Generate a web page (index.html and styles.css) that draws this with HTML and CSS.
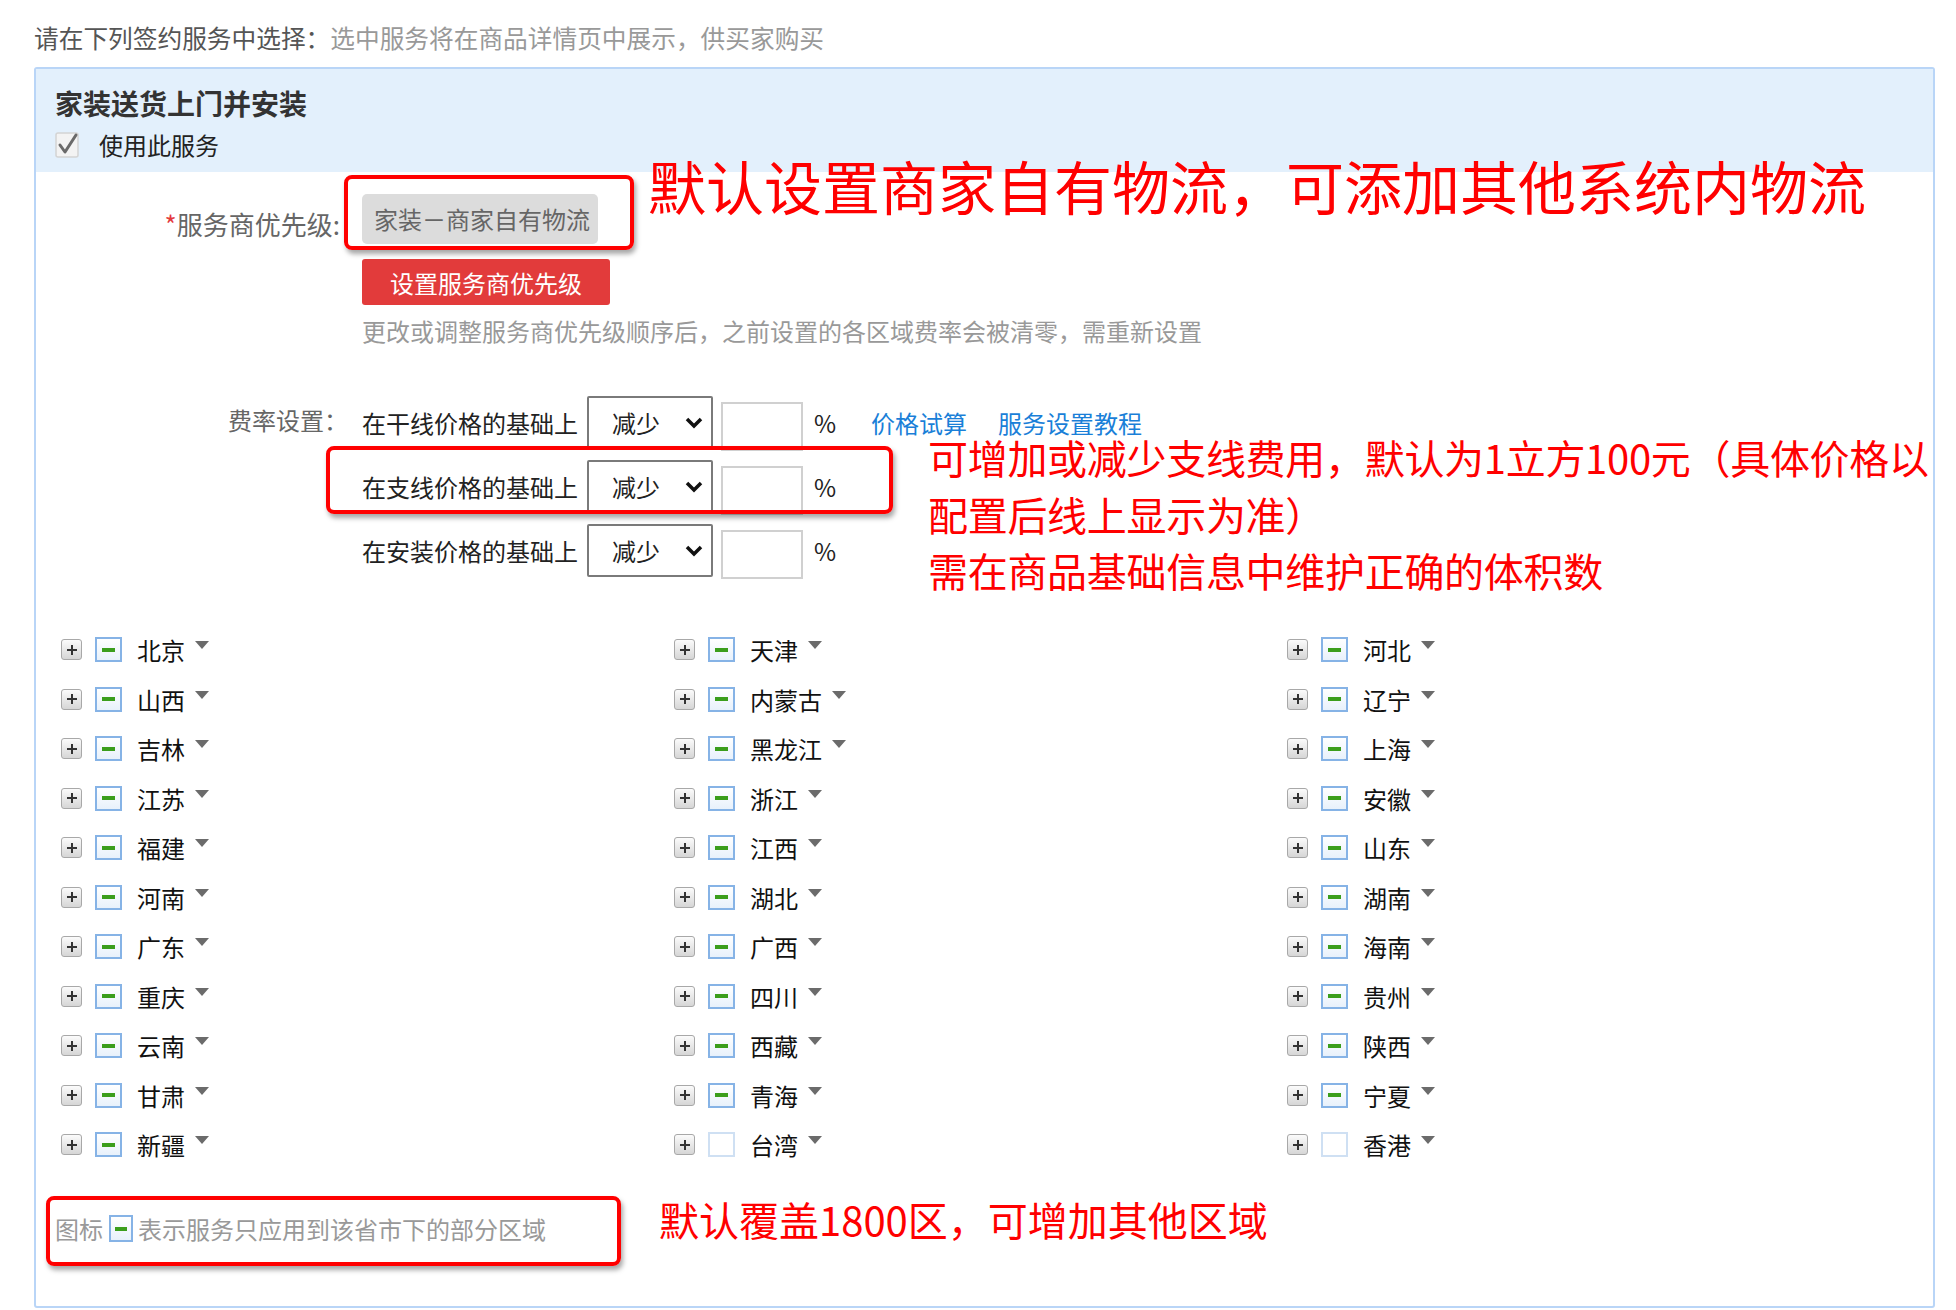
FILE: index.html
```html
<!DOCTYPE html>
<html lang="zh-CN">
<head>
    <meta charset="UTF-8">
    <meta name="viewport" content="width=device-width, initial-scale=1.0">
    <title>签约服务</title>
    <link rel="stylesheet" href="styles.css">
</head>
<body>
    <p class="intro">请在下列签约服务中选择：<span>选中服务将在商品详情页中展示，供买家购买</span></p>

    <div class="panel">
        <div class="panel-head">
            <h3>家装送货上门并安装</h3>
            <div class="use">
                <svg class="check" width="24" height="26" viewBox="0 0 24 26">
                    <rect x="1" y="1" width="22" height="24" rx="2" fill="#f3f3f3" stroke="#d4d4d4" stroke-width="1.5"/>
                    <path d="M5 13 L10 20 L21 3" fill="none" stroke="#6a6a6a" stroke-width="3" stroke-linecap="round" stroke-linejoin="round"/>
                </svg>
                <span>使用此服务</span>
            </div>
        </div>

        <div class="row priority">
            <div class="row-label"><em>*</em>服务商优先级:</div>
            <div class="row-body"><div class="provider">家装－商家自有物流</div></div>
        </div>
        <div class="row set-row">
            <div class="row-label"></div>
            <div class="row-body"><button class="btn-red">设置服务商优先级</button></div>
        </div>
        <p class="note">更改或调整服务商优先级顺序后，之前设置的各区域费率会被清零，需重新设置</p>

        <div class="row fees">
            <div class="row-label">费率设置：</div>
            <div class="row-body">
                <div class="fee">
                    <span class="fee-name">在干线价格的基础上</span>
                    <div class="select">减少<svg width="18" height="12" viewBox="0 0 18 12"><path d="M2 2 L9 9 L16 2" fill="none" stroke="#111" stroke-width="3.5"/></svg></div>
                    <div class="input"></div>
                    <span class="pct">%</span>
                    <a class="link first">价格试算</a>
                    <a class="link">服务设置教程</a>
                </div>
                <div class="fee">
                    <span class="fee-name">在支线价格的基础上</span>
                    <div class="select">减少<svg width="18" height="12" viewBox="0 0 18 12"><path d="M2 2 L9 9 L16 2" fill="none" stroke="#111" stroke-width="3.5"/></svg></div>
                    <div class="input"></div>
                    <span class="pct">%</span>
                </div>
                <div class="fee">
                    <span class="fee-name">在安装价格的基础上</span>
                    <div class="select">减少<svg width="18" height="12" viewBox="0 0 18 12"><path d="M2 2 L9 9 L16 2" fill="none" stroke="#111" stroke-width="3.5"/></svg></div>
                    <div class="input"></div>
                    <span class="pct">%</span>
                </div>
            </div>
        </div>

        <div class="areas">
            <div class="area"><i class="plus"></i><i class="part"></i><span>北京</span><b class="caret"></b></div>
            <div class="area"><i class="plus"></i><i class="part"></i><span>天津</span><b class="caret"></b></div>
            <div class="area"><i class="plus"></i><i class="part"></i><span>河北</span><b class="caret"></b></div>

            <div class="area"><i class="plus"></i><i class="part"></i><span>山西</span><b class="caret"></b></div>
            <div class="area"><i class="plus"></i><i class="part"></i><span>内蒙古</span><b class="caret"></b></div>
            <div class="area"><i class="plus"></i><i class="part"></i><span>辽宁</span><b class="caret"></b></div>

            <div class="area"><i class="plus"></i><i class="part"></i><span>吉林</span><b class="caret"></b></div>
            <div class="area"><i class="plus"></i><i class="part"></i><span>黑龙江</span><b class="caret"></b></div>
            <div class="area"><i class="plus"></i><i class="part"></i><span>上海</span><b class="caret"></b></div>

            <div class="area"><i class="plus"></i><i class="part"></i><span>江苏</span><b class="caret"></b></div>
            <div class="area"><i class="plus"></i><i class="part"></i><span>浙江</span><b class="caret"></b></div>
            <div class="area"><i class="plus"></i><i class="part"></i><span>安徽</span><b class="caret"></b></div>

            <div class="area"><i class="plus"></i><i class="part"></i><span>福建</span><b class="caret"></b></div>
            <div class="area"><i class="plus"></i><i class="part"></i><span>江西</span><b class="caret"></b></div>
            <div class="area"><i class="plus"></i><i class="part"></i><span>山东</span><b class="caret"></b></div>

            <div class="area"><i class="plus"></i><i class="part"></i><span>河南</span><b class="caret"></b></div>
            <div class="area"><i class="plus"></i><i class="part"></i><span>湖北</span><b class="caret"></b></div>
            <div class="area"><i class="plus"></i><i class="part"></i><span>湖南</span><b class="caret"></b></div>

            <div class="area"><i class="plus"></i><i class="part"></i><span>广东</span><b class="caret"></b></div>
            <div class="area"><i class="plus"></i><i class="part"></i><span>广西</span><b class="caret"></b></div>
            <div class="area"><i class="plus"></i><i class="part"></i><span>海南</span><b class="caret"></b></div>

            <div class="area"><i class="plus"></i><i class="part"></i><span>重庆</span><b class="caret"></b></div>
            <div class="area"><i class="plus"></i><i class="part"></i><span>四川</span><b class="caret"></b></div>
            <div class="area"><i class="plus"></i><i class="part"></i><span>贵州</span><b class="caret"></b></div>

            <div class="area"><i class="plus"></i><i class="part"></i><span>云南</span><b class="caret"></b></div>
            <div class="area"><i class="plus"></i><i class="part"></i><span>西藏</span><b class="caret"></b></div>
            <div class="area"><i class="plus"></i><i class="part"></i><span>陕西</span><b class="caret"></b></div>

            <div class="area"><i class="plus"></i><i class="part"></i><span>甘肃</span><b class="caret"></b></div>
            <div class="area"><i class="plus"></i><i class="part"></i><span>青海</span><b class="caret"></b></div>
            <div class="area"><i class="plus"></i><i class="part"></i><span>宁夏</span><b class="caret"></b></div>

            <div class="area"><i class="plus"></i><i class="part"></i><span>新疆</span><b class="caret"></b></div>
            <div class="area"><i class="plus"></i><i class="part empty"></i><span>台湾</span><b class="caret"></b></div>
            <div class="area"><i class="plus"></i><i class="part empty"></i><span>香港</span><b class="caret"></b></div>
        </div>

        <p class="legend">图标<i class="part small"></i>表示服务只应用到该省市下的部分区域</p>

        <!-- annotations drawn over the screenshot -->
        <div class="mark mark-provider"></div>
        <div class="mark mark-fee"></div>
        <div class="mark mark-legend"></div>
        <p class="tip tip-provider">默认设置商家自有物流，可添加其他系统内物流</p>
        <div class="tip tip-fee">
            <p>可增加或减少支线费用，默认为1立方100元（具体价格以</p>
            <p>配置后线上显示为准）</p>
            <p>需在商品基础信息中维护正确的体积数</p>
        </div>
        <p class="tip tip-legend">默认覆盖1800区，可增加其他区域</p>
    </div>
</body>
</html>
```

FILE: styles.css
```css
* {
    margin: 0;
    padding: 0;
    box-sizing: border-box;
    font-family: "Noto Sans CJK SC", "Noto Sans", sans-serif;
}

body {
    background-color: #fff;
    color: #222;
    font-size: 24px;
}

.intro {
    padding: 17px 0 0 34px;
    font-size: 24.7px;
    line-height: 40px;
    color: #555;
}

.intro span {
    color: #999;
}

.panel {
    position: relative;
    width: 1901px;
    height: 1241px;
    margin: 10px 0 0 34px;
    border: 2px solid #b9d5f7;
    border-radius: 3px;
}

.panel-head {
    height: 103px;
    padding: 16px 0 0 19px;
    background-color: #e3f0fc;
}

.panel-head h3 {
    font-size: 28px;
    line-height: 36px;
    font-weight: 700;
    color: #333;
}

.use {
    display: flex;
    align-items: center;
    gap: 20px;
    margin-top: 9px;
    line-height: 30px;
    color: #222;
}

.row {
    display: flex;
    align-items: center;
}

.row-label {
    width: 312px;
    text-align: right;
    color: #666;
}

.row-label em {
    font-style: normal;
    color: #e4393c;
}

.row-body {
    margin-left: 14px;
}

.priority {
    margin-top: 22px;
}

.priority .row-label {
    padding: 8px 8px 0 0;
    font-size: 26px;
}

.provider {
    width: 236px;
    height: 50px;
    line-height: 50px;
    padding-left: 12px;
    background-color: #dcdcdc;
    border-radius: 5px;
    color: #666;
}

.set-row {
    margin-top: 15px;
}

.btn-red {
    width: 248px;
    height: 46px;
    border: none;
    border-radius: 3px;
    background-color: #e23b3b;
    color: #fff;
    font-size: 24px;
}

.note {
    margin: 11px 0 0 326px;
    line-height: 30px;
    color: #999;
}

.fees {
    margin-top: 50px;
    align-items: flex-start;
}

.fees .row-label {
    line-height: 48px;
}

.fee {
    display: flex;
    align-items: center;
    height: 53px;
    margin-bottom: 11px;
}

.fee-name {
    width: 225px;
    color: #222;
}

.select {
    display: flex;
    align-items: center;
    width: 126px;
    height: 53px;
    padding: 0 8px 0 23px;
    border: 2px solid #7a7a7a;
    border-radius: 2px;
    color: #222;
}

.select svg {
    margin-left: auto;
}

.input {
    width: 82px;
    height: 49px;
    margin: 8px 0 0 8px;
    border: 2px solid #d0d0d0;
}

.pct {
    margin-left: 11px;
    color: #222;
}

.link {
    margin-left: 31px;
    line-height: 24px;
    color: #1a7fd8;
}

.link.first {
    margin-left: 35px;
}

.areas {
    display: grid;
    grid-template-columns: repeat(3, 613px);
    grid-auto-rows: 49.5px;
    margin-top: 37px;
    padding-left: 25px;
}

.area {
    display: flex;
    align-items: center;
    color: #111;
}

.plus {
    position: relative;
    width: 21px;
    height: 21px;
    border: 1.5px solid #a8a8a8;
    border-radius: 3px;
    background: linear-gradient(#fbfbfb, #d6d6d6);
}

.plus::before, .plus::after {
    content: "";
    position: absolute;
    left: 50%;
    top: 50%;
    background-color: #333;
}

.plus::before {
    width: 10px;
    height: 2px;
    margin: -1px 0 0 -5px;
}

.plus::after {
    width: 2px;
    height: 10px;
    margin: -5px 0 0 -1px;
}

.part {
    position: relative;
    width: 27px;
    height: 25px;
    margin: 0 15px 0 13px;
    border: 2px solid #86b3e6;
    background: linear-gradient(#fff, #e8f1fb);
}

.part::after {
    content: "";
    position: absolute;
    left: 50%;
    top: 50%;
    width: 13px;
    height: 4px;
    margin: -2px 0 0 -6.5px;
    background-color: #3b9e1c;
}

.part.empty {
    border-color: #cfe0f3;
    background: #fff;
}

.part.empty::after {
    display: none;
}

.caret {
    width: 0;
    height: 0;
    margin: -9px 0 0 10px;
    border-left: 7.5px solid transparent;
    border-right: 7.5px solid transparent;
    border-top: 8px solid #6b6b6b;
}

.legend {
    display: flex;
    align-items: center;
    margin: 44px 0 0 19px;
    line-height: 30px;
    color: #999;
}

.part.small {
    width: 24px;
    height: 27px;
    margin: 0 5px 0 6px;
}

.part.small::after {
    width: 12px;
    margin-left: -6px;
}

.mark {
    position: absolute;
    border: 4px solid #f00;
    border-radius: 8px;
    box-shadow: 2px 4px 5px rgba(0, 0, 0, 0.35);
}

.mark-provider {
    left: 308px;
    top: 106px;
    width: 290px;
    height: 75px;
}

.mark-fee {
    left: 290px;
    top: 377px;
    width: 567px;
    height: 68px;
}

.mark-legend {
    left: 10px;
    top: 1127px;
    width: 575px;
    height: 70px;
}

.tip {
    position: absolute;
    color: #f00;
    white-space: nowrap;
}

.tip-provider {
    left: 612px;
    top: 87px;
    font-size: 58px;
    line-height: 58px;
}

.tip-fee {
    left: 892px;
    top: 368px;
    font-size: 40px;
    letter-spacing: -0.3px;
    line-height: 40px;
}

.tip-fee p + p {
    margin-top: 16.5px;
}

.tip-legend {
    left: 623px;
    top: 1130px;
    font-size: 40px;
    line-height: 40px;
}
```
